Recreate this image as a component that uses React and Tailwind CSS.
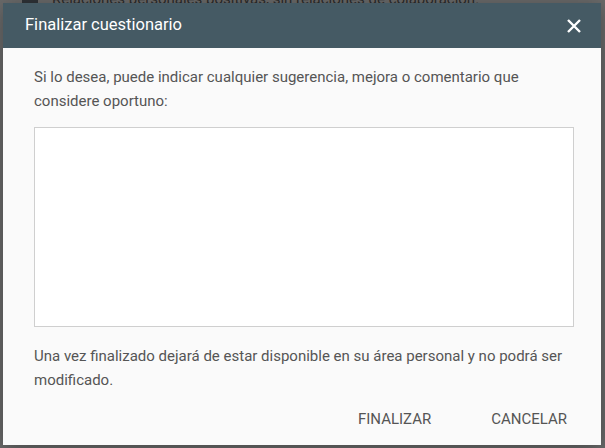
import React from 'react';

export default function App() {
  return (
    <div
      className="relative w-[605px] h-[448px] overflow-hidden bg-[#6b6b6b] p-[3px] pr-[4px]"
      style={{ fontFamily: 'Roboto, "Liberation Sans", sans-serif' }}
    >
      {/* page behind the overlay */}
      <div className="absolute left-[22px] top-[-12px] flex items-center gap-[14px]">
        <div className="w-[16px] h-[16px] bg-[#2f3338]" />
        <span className="text-[15px] text-[#2c2c2c]">
          Relaciones personales positivas, sin relaciones de colaboración.
        </span>
      </div>

      <div className="relative flex flex-col h-[442px] bg-[#fafafa] shadow-[0_4px_20px_rgba(0,0,0,0.35)]">
        {/* header */}
        <div className="flex items-center justify-between h-[45px] bg-[#455a64] pl-[22px] pr-[19px]">
          <h2 className="text-[16.5px] text-white">Finalizar cuestionario</h2>
          <button className="text-white">
            <svg width="16" height="16" viewBox="0 0 16 16" fill="none" stroke="currentColor" strokeWidth="2.4">
              <path d="M2 2L14 14M14 2L2 14" />
            </svg>
          </button>
        </div>

        {/* body */}
        <div className="flex flex-col pl-[31px] pr-[27px] pt-[17px]">
          <p className="pr-[34px] text-[15px] leading-[24px] text-[#555]">
            Si lo desea, puede indicar cualquier sugerencia, mejora o comentario que considere oportuno:
          </p>
          <textarea className="mt-[14px] h-[200px] w-full resize-none border border-[#cfcfcf] bg-white outline-none" />
          <p className="mt-[17px] pr-[4px] text-[15px] leading-[24px] text-[#555]">
            Una vez finalizado dejará de estar disponible en su área personal y no podrá ser modificado.
          </p>
        </div>

        {/* actions */}
        <div className="flex justify-end gap-[32px] pr-[20px] mt-[10px]">
          <button className="px-[14px] py-[6px] text-[15px] text-[#555]">FINALIZAR</button>
          <button className="px-[14px] py-[6px] text-[15px] text-[#555]">CANCELAR</button>
        </div>
      </div>
    </div>
  );
}
